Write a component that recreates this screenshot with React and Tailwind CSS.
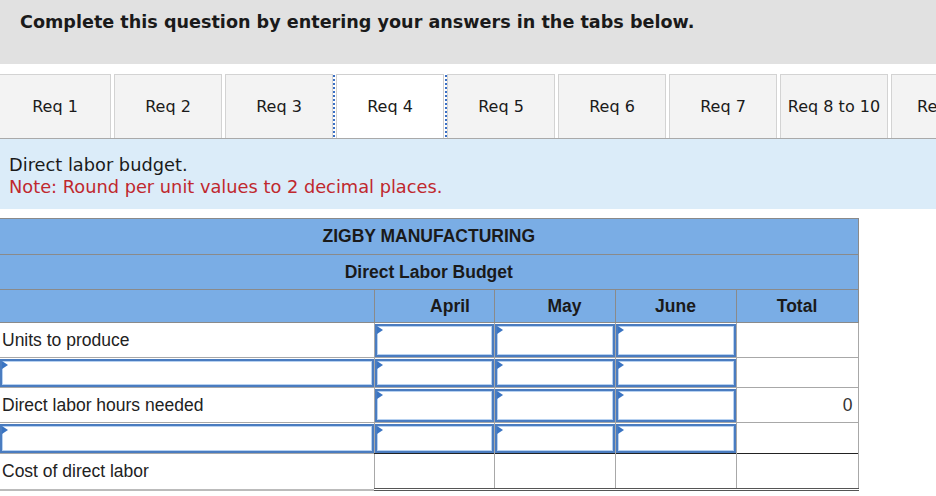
import React from "react";

function Tab({ label, active, first }) {
  const base =
    "shrink-0 h-[64px] flex items-center justify-center border border-b-0 text-[16px] text-[#1a1a1a] whitespace-nowrap overflow-hidden";
  const width = first ? "w-[111px] border-l-0" : "w-[108px]";
  const look = active
    ? "bg-white border-[#d0d0d0] outline-2 outline-dotted outline-[#3a6fc4] outline-offset-1 relative z-10"
    : "bg-[#f3f3f3] border-[#d3d3d3]";
  return <div className={`${base} ${width} ${look}`}>{label}</div>;
}

function InputBox() {
  return (
    <div className="relative h-full w-full border-2 border-[#4a7cc0] bg-white shadow-[inset_0_0_0_1px_#b7d1f0]">
      <span className="absolute left-0 top-0 w-0 h-0 border-y-[4px] border-y-transparent border-l-[6px] border-l-[#3a74c2]" />
    </div>
  );
}

export default function App() {
  const tabs = ["Req 1", "Req 2", "Req 3", "Req 4", "Req 5", "Req 6", "Req 7", "Req 8 to 10", "Req 11"];
  const th = "border border-[#8a8a8a] bg-[#7aade5] font-bold text-[#1a1a1a] p-0";
  const lbl = "border-b border-r border-[#a8a8a8] p-0 text-left pl-[2px] text-[#222]";
  const num = "border border-[#a8a8a8] p-0";
  return (
    <div className="w-[936px] h-[496px] overflow-hidden bg-white font-['DejaVu_Sans',Verdana,sans-serif]">
      <div className="h-[64px] bg-[#e1e1e1] pl-[20px] pt-[12px]">
        <p className="text-[17.6px] leading-[20px] font-bold text-[#1a1a1a] whitespace-nowrap">
          Complete this question by entering your answers in the tabs below.
        </p>
      </div>
      <div className="h-[10px]" />
      <div className="flex gap-[3px] h-[65px] border-b border-[#a9a9a9] overflow-hidden pt-0">
        {tabs.map((t, i) => (
          <Tab key={t} label={t} active={i === 3} first={i === 0} />
        ))}
      </div>
      <div className="h-[70px] bg-[#dbecf9] px-[9px] pt-[15px] text-[17.8px] leading-[21.5px]">
        <p className="text-[#1a1a1a]">Direct labor budget.</p>
        <p className="text-[#c0282e]">Note: Round per unit values to 2 decimal places.</p>
      </div>
      <div className="h-[9px]" />
      <table className="border-collapse table-fixed w-[858px] font-['Liberation_Sans',Arial,sans-serif] text-[17.5px]">
        <colgroup>
          <col className="w-[374px]" />
          <col className="w-[120px]" />
          <col className="w-[121px]" />
          <col className="w-[121px]" />
          <col className="w-[122px]" />
        </colgroup>
        <thead>
          <tr className="h-[36px]">
            <th colSpan={5} className={`${th} border-l-0`}>ZIGBY MANUFACTURING</th>
          </tr>
          <tr className="h-[35px]">
            <th colSpan={5} className={`${th} border-l-0`}>Direct Labor Budget</th>
          </tr>
          <tr className="h-[33px]">
            <th className={`${th} border-l-0`}></th>
            <th className={`${th} pl-[32px]`}>April</th>
            <th className={`${th} pl-[20px]`}>May</th>
            <th className={th}>June</th>
            <th className={th}>Total</th>
          </tr>
        </thead>
        <tbody>
          <tr className="h-[35px]">
            <td className={lbl}>Units to produce</td>
            <td className={`${num} h-[35px] pt-[1px]`}><InputBox /></td>
            <td className={`${num} h-[35px] pt-[1px]`}><InputBox /></td>
            <td className={`${num} h-[35px] pt-[1px]`}><InputBox /></td>
            <td className={num}></td>
          </tr>
          <tr className="h-[30px]">
            <td className={`${lbl} h-[30px] pt-[1px]`}><div className="h-full -ml-[2px]"><InputBox /></div></td>
            <td className={`${num} h-[30px] pt-[1px]`}><InputBox /></td>
            <td className={`${num} h-[30px] pt-[1px]`}><InputBox /></td>
            <td className={`${num} h-[30px] pt-[1px]`}><InputBox /></td>
            <td className={num}></td>
          </tr>
          <tr className="h-[35px]">
            <td className={lbl}>Direct labor hours needed</td>
            <td className={`${num} border-t-[#222] h-[35px] pt-[1px]`}><InputBox /></td>
            <td className={`${num} border-t-[#222] h-[35px] pt-[1px]`}><InputBox /></td>
            <td className={`${num} border-t-[#222] h-[35px] pt-[1px]`}><InputBox /></td>
            <td className={`${num} border-t-[#222] text-right pr-[5px] text-[#333]`}>0</td>
          </tr>
          <tr className="h-[31px]">
            <td className={`${lbl} h-[31px] pt-[1px]`}><div className="h-full -ml-[2px]"><InputBox /></div></td>
            <td className={`${num} h-[31px] pt-[1px]`}><InputBox /></td>
            <td className={`${num} h-[31px] pt-[1px]`}><InputBox /></td>
            <td className={`${num} h-[31px] pt-[1px]`}><InputBox /></td>
            <td className={num}></td>
          </tr>
          <tr className="h-[36px]">
            <td className={`${lbl} border-b-2 border-b-[#bbbbbb]`}>Cost of direct labor</td>
            <td className={`${num} border-t-[#222] border-b-[3px] border-b-[#555] border-double`}></td>
            <td className={`${num} border-t-[#222] border-b-[3px] border-b-[#555] border-double`}></td>
            <td className={`${num} border-t-[#222] border-b-[3px] border-b-[#555] border-double`}></td>
            <td className={`${num} border-t-[#222] border-b-[3px] border-b-[#555] border-double`}></td>
          </tr>
        </tbody>
      </table>
    </div>
  );
}
